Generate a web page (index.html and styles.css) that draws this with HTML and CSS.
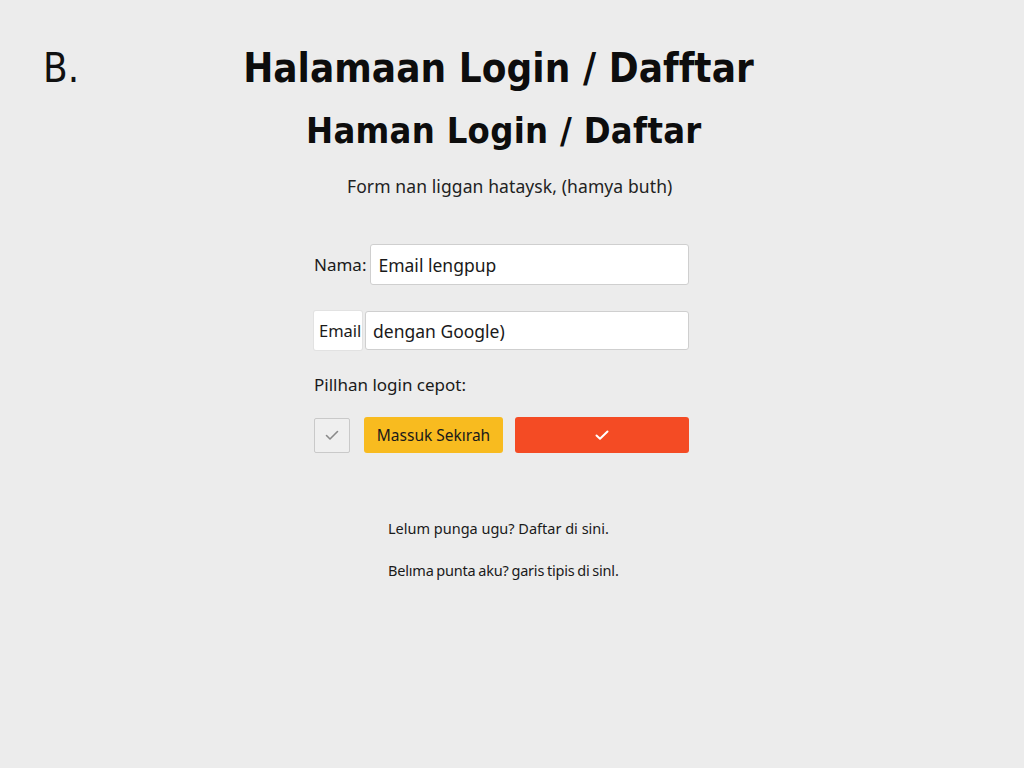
FILE: index.html
```html
<!DOCTYPE html>
<html lang="id">
<head>
<meta charset="utf-8">
<title>Halaman Login / Daftar</title>
<link rel="stylesheet" href="styles.css">
</head>
<body>
<div class="page">
  <header class="head">
    <span class="mark">B.</span>
    <h1 class="title">Halamaan Login / Dafftar</h1>
  </header>
  <h2 class="subtitle">Haman Login / Daftar</h2>
  <p class="lead">Form nan liggan hataysk, (hamya buth)</p>

  <form class="form">
    <div class="row">
      <label class="label">Nama:</label>
      <div class="input input-a">Email lengpup</div>
    </div>
    <div class="row row-2">
      <label class="label label-box">Email</label>
      <div class="input input-b">dengan Google)</div>
    </div>
    <p class="opt">Pillhan login cepot:</p>
    <div class="actions">
      <span class="check">
        <svg width="18" height="18" viewBox="0 0 18 18"><path d="M3.5 9.5 L7 13 L14.5 5.5" fill="none" stroke="#8a8a8a" stroke-width="1.6" stroke-linecap="round" stroke-linejoin="round"/></svg>
      </span>
      <button type="button" class="btn btn-yellow">Massuk Sekırah</button>
      <button type="button" class="btn btn-red">
        <svg width="16" height="14" viewBox="0 0 16 14"><path d="M2.5 7.5 L6 10.8 L13.5 3.5" fill="none" stroke="#ffffff" stroke-width="2" stroke-linecap="round" stroke-linejoin="round"/></svg>
      </button>
    </div>
  </form>

  <p class="link link-1">Lelum punga ugu? Daftar di sini.</p>
  <p class="link link-2">Belıma punta aku? garis tipis di sinl.</p>
</div>
</body>
</html>
```
FILE: styles.css
```css
html, body {
  margin: 0;
  padding: 0;
  background: #ececec;
}
body {
  font-family: "Noto Sans", "Open Sans", sans-serif;
  color: #1a1a1a;
  width: 1024px;
  height: 768px;
  overflow: hidden;
}
.page {
  padding-top: 45px;
}
.head {
  display: flex;
  align-items: baseline;
  padding-left: 43px;
  height: 52px;
}
.mark {
  font-family: "DejaVu Sans Condensed", "DejaVu Sans", sans-serif;
  font-size: 40px;
  font-weight: 400;
  color: #111;
}
.title {
  margin: 0 0 0 164px;
  font-family: "DejaVu Sans Condensed", "DejaVu Sans", sans-serif;
  font-size: 40px;
  font-weight: 700;
  color: #0d0d0d;
  letter-spacing: 0.05px;
}
.subtitle {
  margin: 10px 0 0 306px;
  font-family: "DejaVu Sans Condensed", "DejaVu Sans", sans-serif;
  font-size: 36px;
  font-weight: 700;
  color: #0d0d0d;
  line-height: 48px;
  letter-spacing: 0.3px;
}
.lead {
  margin: 19px 0 0 347px;
  font-size: 17.5px;
  color: #222;
  line-height: 24px;
  letter-spacing: 0.1px;
}
.form {
  margin: 46px 0 0 314px;
  width: 375px;
}
.row {
  display: flex;
  align-items: center;
  gap: 4px;
}
.row-2 {
  margin-top: 26px;
  gap: 3px;
}
.label {
  font-size: 17px;
  color: #1a1a1a;
}
.label-box {
  background: #ffffff;
  height: 39px;
  width: 48px;
  box-sizing: border-box;
  display: flex;
  align-items: center;
  padding-left: 5px;
  border-radius: 2px;
  box-shadow: 0 0 0 1px #e2e2e2;
  font-size: 16.5px;
}
.input {
  flex: 1;
  background: #ffffff;
  border: 1px solid #cfcfcf;
  border-radius: 3px;
  box-sizing: border-box;
  display: flex;
  align-items: center;
  padding-left: 7px;
  font-size: 17.5px;
  color: #1a1a1a;
}
.input-a { height: 41px; }
.input-b { height: 39px; }
.opt {
  margin: 23px 0 0;
  font-size: 17px;
  line-height: 24px;
  color: #1a1a1a;
}
.actions {
  display: flex;
  align-items: center;
  margin-top: 20px;
  gap: 14px;
}
.check {
  width: 36px;
  height: 35px;
  box-sizing: border-box;
  border: 1px solid #c9c9c9;
  background: #efefef;
  border-radius: 2px;
  display: flex;
  align-items: center;
  justify-content: center;
}
.btn {
  border: none;
  height: 36px;
  border-radius: 3px;
  font-family: "Noto Sans", "Open Sans", sans-serif;
  font-size: 15.5px;
  color: #1a1a1a;
  padding: 0;
  display: flex;
  align-items: center;
  justify-content: center;
}
.btn-yellow {
  background: #f8bb1f;
  width: 139px;
}
.btn-red {
  background: #f44b24;
  width: 174px;
  margin-left: -2px;
}
.link {
  font-size: 14.5px;
  line-height: 20px;
  color: #1a1a1a;
  margin: 0;
}
.link-1 {
  margin: 65px 0 0 388px;
}
.link-2 {
  margin: 22px 0 0 388px;
  word-spacing: -0.8px;
  letter-spacing: -0.2px;
}
```
